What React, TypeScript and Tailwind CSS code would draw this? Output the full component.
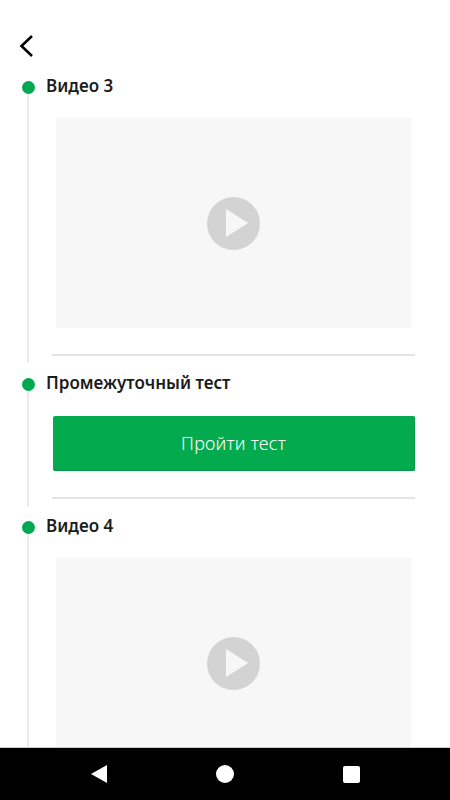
function PlayCover() {
  return (
    <div className="ml-[10px] w-[355px] h-[210px] shrink-0 bg-[#f7f7f7] flex items-center justify-center">
      <div className="w-[53px] h-[53px] rounded-full bg-[#d3d3d3] flex items-center justify-center">
        <svg width="22" height="28" viewBox="0 0 22 28" className="ml-[7px]">
          <path d="M0 0 L22 14 L0 28 Z" fill="#f7f7f7" />
        </svg>
      </div>
    </div>
  );
}

function Section({
  title,
  children,
  className = "",
}: {
  title: string;
  children: React.ReactNode;
  className?: string;
}) {
  return (
    <div className={`flex shrink-0 pl-[22px] ${className}`}>
      <div className="w-[13px] shrink-0 flex flex-col items-center">
        <div className="w-[13px] h-[13px] rounded-full bg-[#00a94f] shrink-0" />
        <div className="w-[2px] flex-1 bg-[#ececec] mr-[1px]" />
      </div>
      <div className="ml-[11px] w-[369px] flex flex-col">
        <h2 className="h-[10px] flex items-center text-[17px] font-semibold text-[#1c1c1c] font-['Noto_Sans',sans-serif] whitespace-nowrap">
          {title}
        </h2>
        {children}
      </div>
    </div>
  );
}

export default function App() {
  return (
    <div className="w-[450px] h-[800px] bg-white flex flex-col overflow-hidden">
      <div className="flex-1 min-h-0 overflow-hidden flex flex-col">
        <div className="h-[81px] shrink-0 pt-[35px] pl-[19px]">
          <svg width="15" height="22" viewBox="0 0 15 22" fill="none">
            <path d="M13 1 L2.5 11 L13 21" stroke="#000" strokeWidth="2.6" />
          </svg>
        </div>

        <Section title="Видео 3" className="h-[282px] mb-[15px]">
          <div className="mt-[27px]" />
          <PlayCover />
          <div className="mt-[26px] ml-[6px] h-[2px] bg-[#e3e3e3]" />
        </Section>

        <Section title="Промежуточный тест" className="h-[129px] mb-[14px]">
          <button className="mt-[28px] ml-[7px] h-[55px] rounded-[2px] bg-[#04aa4e] border-r border-b border-[#069a48] text-white text-[18px] tracking-[0.2px] font-['Noto_Sans',sans-serif] font-light">
            Пройти тест
          </button>
          <div className="mt-[26px] ml-[6px] h-[2px] bg-[#e3e3e3]" />
        </Section>

        <Section title="Видео 4" className="h-[300px]">
          <div className="mt-[27px]" />
          <PlayCover />
        </Section>
      </div>

      <div className="h-[53px] shrink-0 bg-black border-t border-[#c9c9c9] flex items-center justify-center">
        <div className="flex items-center gap-[109px]">
          <svg width="16" height="18" viewBox="0 0 16 18">
            <path d="M16 0 L16 18 L0 9 Z" fill="#fff" />
          </svg>
          <div className="w-[18px] h-[18px] rounded-full bg-white" />
          <div className="w-[17px] h-[17px] rounded-[2px] bg-white" />
        </div>
      </div>
    </div>
  );
}
